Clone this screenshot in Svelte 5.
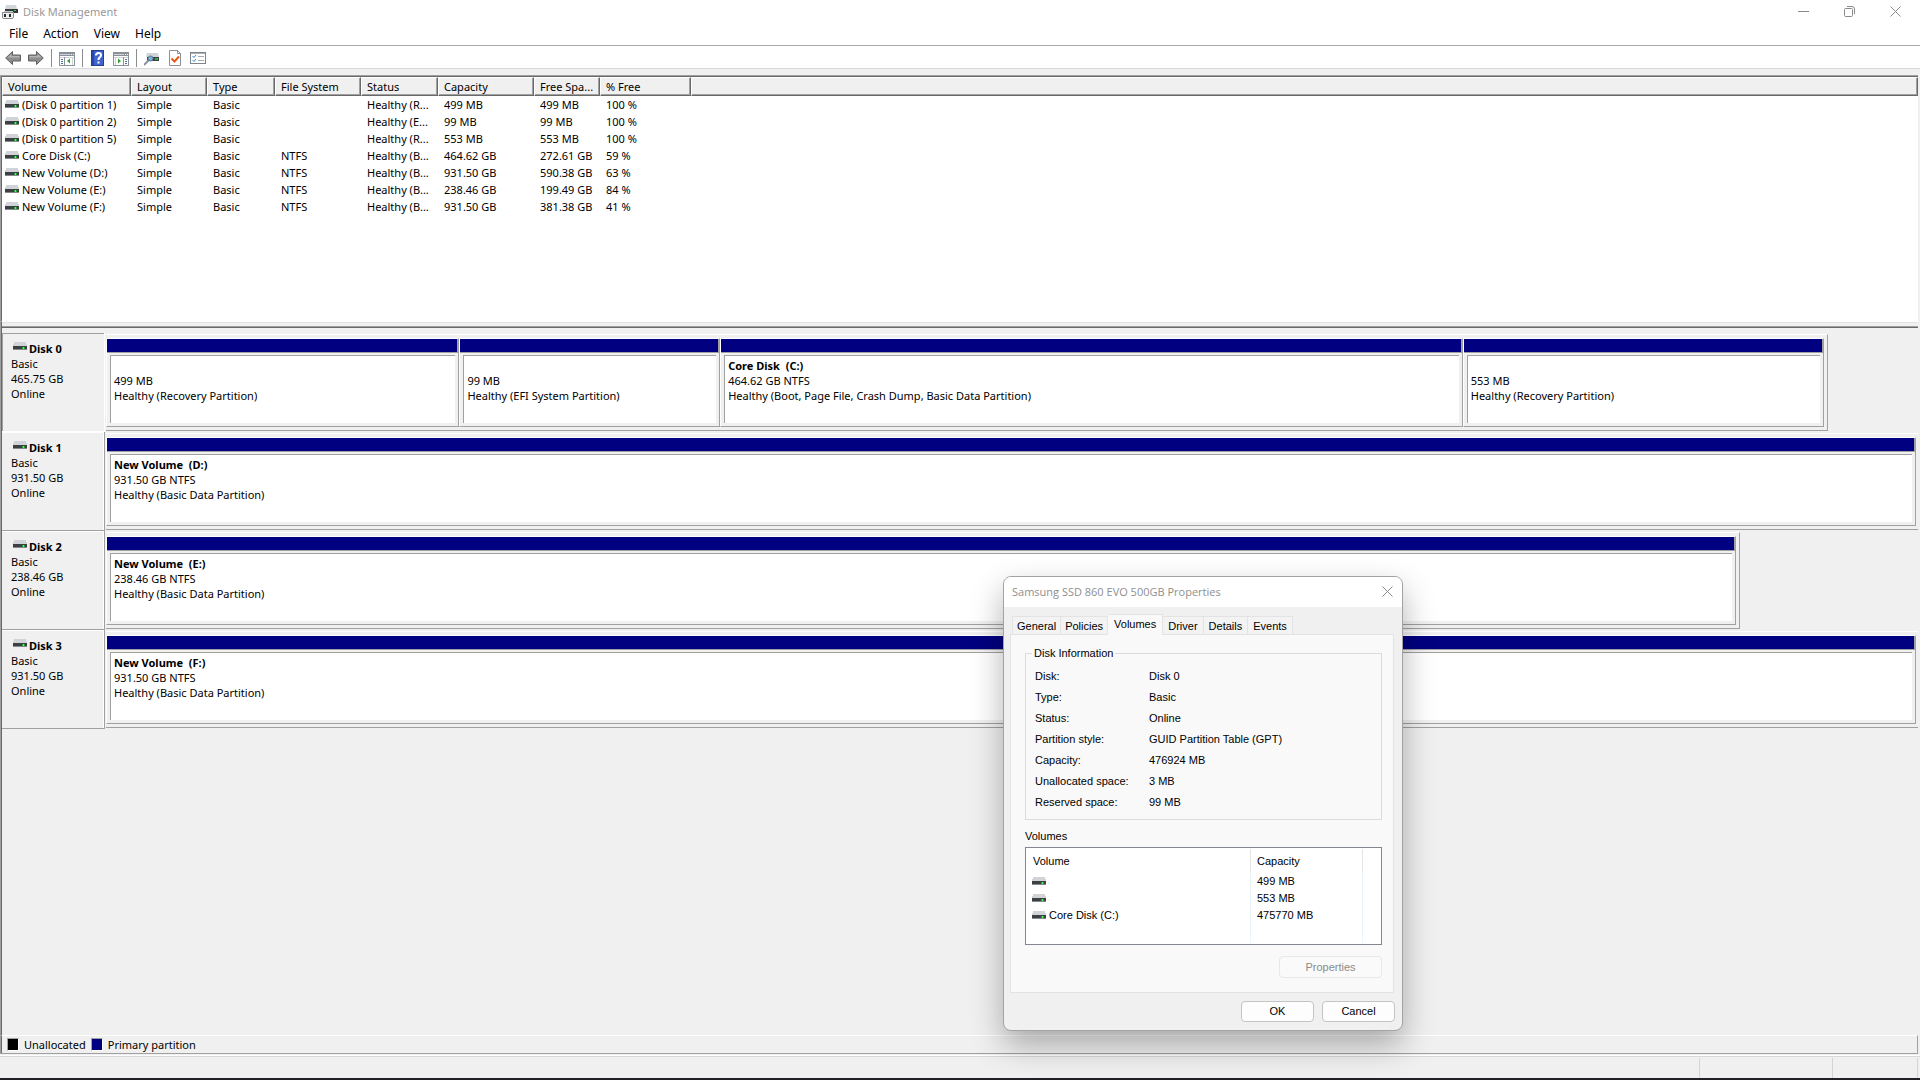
<script>
    const menus = ['File', 'Action', 'View', 'Help'];
    const columns = ['Volume', 'Layout', 'Type', 'File System', 'Status', 'Capacity', 'Free Spa...', '% Free'];
    const columnWidths = [129, 76, 68, 86, 77, 96, 66, 91];

    const volumes = [
        ['(Disk 0 partition 1)', 'Simple', 'Basic', '', 'Healthy (R...', '499 MB', '499 MB', '100 %'],
        ['(Disk 0 partition 2)', 'Simple', 'Basic', '', 'Healthy (E...', '99 MB', '99 MB', '100 %'],
        ['(Disk 0 partition 5)', 'Simple', 'Basic', '', 'Healthy (R...', '553 MB', '553 MB', '100 %'],
        ['Core Disk (C:)', 'Simple', 'Basic', 'NTFS', 'Healthy (B...', '464.62 GB', '272.61 GB', '59 %'],
        ['New Volume (D:)', 'Simple', 'Basic', 'NTFS', 'Healthy (B...', '931.50 GB', '590.38 GB', '63 %'],
        ['New Volume (E:)', 'Simple', 'Basic', 'NTFS', 'Healthy (B...', '238.46 GB', '199.49 GB', '84 %'],
        ['New Volume (F:)', 'Simple', 'Basic', 'NTFS', 'Healthy (B...', '931.50 GB', '381.38 GB', '41 %']
    ];

    // width: share of the pane, share: relative width of each partition
    const disks = [
        {
            name: 'Disk 0', size: '465.75 GB', width: 95.04,
            partitions: [
                { name: '', size: '499 MB', status: 'Healthy (Recovery Partition)', share: 353 },
                { name: '', size: '99 MB', status: 'Healthy (EFI System Partition)', share: 260 },
                { name: 'Core Disk  (C:)', size: '464.62 GB NTFS', status: 'Healthy (Boot, Page File, Crash Dump, Basic Data Partition)', share: 744 },
                { name: '', size: '553 MB', status: 'Healthy (Recovery Partition)', share: 361 }
            ]
        },
        {
            name: 'Disk 1', size: '931.50 GB', width: 100.1,
            partitions: [{ name: 'New Volume  (D:)', size: '931.50 GB NTFS', status: 'Healthy (Basic Data Partition)', share: 1 }]
        },
        {
            name: 'Disk 2', size: '238.46 GB', width: 90.2,
            partitions: [{ name: 'New Volume  (E:)', size: '238.46 GB NTFS', status: 'Healthy (Basic Data Partition)', share: 1 }]
        },
        {
            name: 'Disk 3', size: '931.50 GB', width: 100.1,
            partitions: [{ name: 'New Volume  (F:)', size: '931.50 GB NTFS', status: 'Healthy (Basic Data Partition)', share: 1 }]
        }
    ];

    const tabs = ['General', 'Policies', 'Volumes', 'Driver', 'Details', 'Events'];
    const diskInfo = [
        ['Disk:', 'Disk 0'],
        ['Type:', 'Basic'],
        ['Status:', 'Online'],
        ['Partition style:', 'GUID Partition Table (GPT)'],
        ['Capacity:', '476924 MB'],
        ['Unallocated space:', '3 MB'],
        ['Reserved space:', '99 MB']
    ];
    const diskVolumes = [
        ['', '499 MB'],
        ['', '553 MB'],
        ['Core Disk (C:)', '475770 MB']
    ];

    let selectedDisk = $state(0);
    let activeTab = $state('Volumes');
    let dialogOpen = $state(true);
</script>

{#snippet driveIcon()}
    <svg class="drive" width="14" height="9" viewBox="0 0 14 9" aria-hidden="true">
        <path d="M1 0h12v2h1v2H0V2h1z" fill="#d0d4d8" />
        <rect y="4" width="14" height="4" fill="#3c4043" />
        <rect y="7" width="14" height="1" fill="#85898d" />
        <rect x="9" y="5" width="3" height="2" fill="#1f9a2c" />
        <rect x="10" y="5" width="1" height="2" fill="#4dff5a" />
    </svg>
{/snippet}

<div class="window">
    <header class="titlebar">
        <svg width="16" height="16" viewBox="0 0 16 16" aria-hidden="true">
            <path d="M4 1h10l1 4H3z" fill="#d3d6d9" />
            <rect x="3" y="5" width="13" height="4" fill="#34383b" />
            <rect x="12" y="6" width="2" height="1" fill="#2fd23c" />
            <rect x="2" y="7" width="9" height="2" fill="#c6c8ca" />
            <path d="M0 8h12v6H11v1H1v-1H0z" fill="#8b8e91" />
            <path d="M1 9h10v5H1z" fill="#eceef0" />
            <rect x="2" y="10" width="2" height="3" fill="#26292b" />
            <rect x="7" y="10" width="2" height="3" fill="#26292b" />
        </svg>
        <h1>Disk Management</h1>
        <div class="window-buttons">
            <button aria-label="Minimize">
                <svg width="11" height="11" viewBox="0 0 11 11"><path d="M0 5.5h11" /></svg>
            </button>
            <button aria-label="Restore">
                <svg width="11" height="11" viewBox="0 0 11 11"><rect x=".5" y="2.5" width="8" height="8" rx="1" /><path d="M3 .5h5q2.500 0 2.500 2.500v5" /></svg>
            </button>
            <button aria-label="Close">
                <svg width="11" height="11" viewBox="0 0 11 11"><path d="M.5.500l10 10M10.500.500l-10 10" /></svg>
            </button>
        </div>
    </header>

    <nav class="menubar">
        {#each menus as menu}
            <button>{menu}</button>
        {/each}
    </nav>

    <div class="toolbar">
        <button aria-label="Back">
            <svg width="16" height="16" viewBox="0 0 16 16"><path d="M.7 8L7.500 1.500V5h8v6h-8v3.500z" fill="#8d8d8d" stroke="#5f5f5f" /><path d="M2.500 7.500L6.500 4v2h8v1.500z" fill="#b4b4b4" /></svg>
        </button>
        <button aria-label="Forward">
            <svg width="16" height="16" viewBox="0 0 16 16"><path d="M15.300 8L8.500 1.500V5h-8v6h8v3.500z" fill="#8d8d8d" stroke="#5f5f5f" /><path d="M13.500 7.500L9.500 4v2h-8v1.500z" fill="#b4b4b4" /></svg>
        </button>
        <span class="separator"></span>
        <button aria-label="Show/Hide Console Tree">
            <svg width="16" height="16" viewBox="0 0 16 16">
                <rect x=".5" y="2.500" width="15" height="13" fill="#fff" stroke="#8b9199" />
                <path d="M1 3h14v3H1z" fill="#8b9199" /><path d="M1 4.500h10M1 7.500h14" stroke="#cfd3d7" />
                <path d="M12 4.500h1M14 4.500h1" stroke="#fff" />
                <path d="M5.500 7v8" stroke="#8b9199" /><path d="M2 9.500h2M2 11.500h2M2 13.500h2" stroke="#4c6f9c" />
                <path d="M11 8.500v5l-3-2.500z" fill="#33a52c" /><path d="M13.500 8v7" stroke="#ccd0d4" />
            </svg>
        </button>
        <span class="separator"></span>
        <button aria-label="Help">
            <svg width="16" height="16" viewBox="0 0 16 16">
                <rect x="1.500" y=".5" width="12" height="15" fill="#3f63cf" stroke="#273f8f" /><path d="M2 1h2v14H2z" fill="#2747a6" />
                <path d="M6 5.500Q6 3 8.500 3T11 5.300Q11 6.500 9.700 7.400T8.500 10" fill="none" stroke="#fff" stroke-width="2" /><rect x="7.500" y="11.500" width="2" height="2" fill="#fff" />
            </svg>
        </button>
        <button aria-label="Show/Hide Action Pane">
            <svg width="16" height="16" viewBox="0 0 16 16">
                <rect x=".5" y="2.500" width="15" height="13" fill="#fff" stroke="#8b9199" />
                <path d="M1 3h14v3H1z" fill="#8b9199" /><path d="M1 4.500h10M1 7.500h14" stroke="#cfd3d7" />
                <path d="M12 4.500h1M14 4.500h1" stroke="#fff" />
                <path d="M10.500 7v8" stroke="#8b9199" /><path d="M12 9.500h2M12 11.500h2M12 13.500h2" stroke="#4c6f9c" />
                <path d="M5 8.500v5l3-2.500z" fill="#33a52c" /><path d="M2.500 8v7" stroke="#ccd0d4" />
            </svg>
        </button>
        <span class="separator"></span>
        <button aria-label="Rescan Disks">
            <svg width="16" height="16" viewBox="0 0 16 16">
                <path d="M3 3h11l1 4H2z" fill="#d0d4d8" /><rect x="3" y="7" width="12" height="4" fill="#3c4043" />
                <rect x="11" y="8" width="3" height="2" fill="#25b432" />
                <path d="M0 15l5-5" stroke="#8796a5" stroke-width="2" /><circle cx="6.500" cy="8.500" r="2.500" fill="#7faed8" stroke="#5b7793" />
            </svg>
        </button>
        <button aria-label="Properties">
            <svg width="16" height="16" viewBox="0 0 16 16">
                <path d="M2.500.500h8l3 3v12h-11z" fill="#fff" stroke="#8b9199" /><path d="M10.500.500v3h3" fill="none" stroke="#8b9199" />
                <path d="M4.500 8.500l3 3 4.500-5" fill="none" stroke="#e8591b" stroke-width="2" />
            </svg>
        </button>
        <button aria-label="Settings">
            <svg width="16" height="16" viewBox="0 0 16 16">
                <rect x=".5" y="2.500" width="15" height="11" fill="#fff" stroke="#7d858e" /><path d="M1 3.500h14" stroke="#a9afb6" />
                <path d="M2.500 6l1.500 1.500L6 5M2.500 10l1.500 1.500L6 9" fill="none" stroke="#3a86d0" /><path d="M8 6.500h6M8 10.500h6" stroke="#a4abb3" />
            </svg>
        </button>
    </div>

    <main>
        <section class="volume-list">
            <table>
                <colgroup>
                    {#each columnWidths as width}
                        <col style="width: {width}px" />
                    {/each}
                    <col />
                </colgroup>
                <thead>
                    <tr>
                        {#each columns as column}
                            <th>{column}</th>
                        {/each}
                        <th></th>
                    </tr>
                </thead>
                <tbody>
                    {#each volumes as row}
                        <tr>
                            {#each row as cell, i}
                                {#if i === 0}
                                    <td class="name"><span>{@render driveIcon()}{cell}</span></td>
                                {:else}
                                    <td>{cell}</td>
                                {/if}
                            {/each}
                            <td></td>
                        </tr>
                    {/each}
                </tbody>
            </table>
        </section>
        <div class="splitter"></div>

        <section class="disks">
            {#each disks as disk, i}
                <div class="disk">
                    <button class="disk-label" class:selected={selectedDisk === i} onclick={() => (selectedDisk = i)}>
                        <strong>{@render driveIcon()}{disk.name}</strong>
                        <span>Basic</span>
                        <span>{disk.size}</span>
                        <span>Online</span>
                    </button>
                    <div class="strip-area">
                        <div class="strip" style="width: {disk.width}%">
                            {#each disk.partitions as partition}
                                <div class="partition" style="flex-grow: {partition.share}">
                                    <div class="bar"></div>
                                    <div class="body">
                                        <div class="box">
                                            <strong>{partition.name}</strong>
                                            <span>{partition.size}</span>
                                            <span>{partition.status}</span>
                                        </div>
                                    </div>
                                </div>
                            {/each}
                        </div>
                    </div>
                </div>
            {/each}
        </section>

        <div class="legend">
            <span class="swatch unallocated"></span>Unallocated
            <span class="swatch primary"></span>Primary partition
        </div>
    </main>

    <footer class="statusbar">
        <span class="grow"></span>
        <span class="wide"></span>
        <span class="narrow"></span>
    </footer>
</div>

{#if dialogOpen}
    <div class="dialog" role="dialog" aria-labelledby="dialog-title">
        <div class="dialog-title">
            <h2 id="dialog-title">Samsung SSD 860 EVO 500GB Properties</h2>
            <button aria-label="Close" onclick={() => (dialogOpen = false)}>
                <svg width="11" height="11" viewBox="0 0 11 11"><path d="M.5.500l10 10M10.500.500l-10 10" /></svg>
            </button>
        </div>
        <div class="tabs" role="tablist">
            {#each tabs as tab}
                <button role="tab" class:active={activeTab === tab} aria-selected={activeTab === tab} onclick={() => (activeTab = tab)}>{tab}</button>
            {/each}
        </div>
        <div class="panel">
            <fieldset>
                <legend>Disk Information</legend>
                <dl>
                    {#each diskInfo as [label, value]}
                        <dt>{label}</dt>
                        <dd>{value}</dd>
                    {/each}
                </dl>
            </fieldset>
            <h3>Volumes</h3>
            <div class="disk-volumes">
                <table>
                    <thead>
                        <tr><th>Volume</th><th>Capacity</th><th></th></tr>
                    </thead>
                    <tbody>
                        {#each diskVolumes as [name, capacity]}
                            <tr>
                                <td><span>{@render driveIcon()}{name}</span></td>
                                <td>{capacity}</td>
                                <td></td>
                            </tr>
                        {/each}
                        <tr class="filler"><td></td><td></td><td></td></tr>
                    </tbody>
                </table>
            </div>
            <button class="push properties" disabled>Properties</button>
        </div>
        <div class="actions">
            <button class="push" onclick={() => (dialogOpen = false)}>OK</button>
            <button class="push" onclick={() => (dialogOpen = false)}>Cancel</button>
        </div>
    </div>
{/if}

<style>
    :global(body) {
        margin: 0;
        background: #f0f0f0;
    }

    * {
        box-sizing: border-box;
    }

    button {
        margin: 0;
        padding: 0;
        border: 0;
        background: none;
        color: inherit;
        font: inherit;
    }

    h1, h2, h3, dl, dd {
        margin: 0;
        font-size: inherit;
        font-weight: normal;
    }

    svg {
        display: block;
        flex: none;
    }

    .window {
        display: flex;
        flex-direction: column;
        min-height: 100vh;
        border-bottom: 2px solid #202124;
        background: #f0f0f0;
        color: #000;
        font: 11px/15px "Noto Sans", "Open Sans", sans-serif;
    }

    .titlebar {
        display: flex;
        align-items: center;
        height: 23px;
        padding-left: 2px;
        background: #fff;
        color: #999;
    }

    h1 {
        margin-left: 5px;
    }

    .window-buttons {
        display: flex;
        margin-left: auto;
        padding-right: 2px;
    }

    .window-buttons button {
        display: flex;
        align-items: center;
        justify-content: center;
        width: 46px;
        height: 21px;
    }

    .window-buttons svg, .dialog-title svg {
        fill: none;
        stroke: #8a8a8a;
    }

    .menubar {
        display: flex;
        gap: 15px;
        height: 23px;
        padding: 0 0 2px 9px;
        border-bottom: 1px solid #a8aab0;
        background: #fff;
        font-size: 12px;
    }

    .toolbar {
        display: flex;
        align-items: center;
        height: 23px;
        padding: 2px 0 0 5px;
        border-bottom: 1px solid #dadada;
        background: #fff;
    }

    .toolbar button {
        margin-right: 7px;
    }

    .separator {
        width: 1px;
        height: 18px;
        margin-right: 7px;
        background: #8c8c8c;
    }

    main {
        display: flex;
        flex: 1;
        flex-direction: column;
        margin: 6px 2px 2px 0;
        border-top: 1px solid #a0a0a0;
        border-left: 1px solid #a0a0a0;
        border-bottom: 1px solid #a0a0a0;
    }

    .volume-list {
        min-height: 245px;
        border-top: 1px solid #696969;
        border-left: 1px solid #696969;
        background: #fff;
    }

    table {
        width: 100%;
        border-spacing: 0;
        table-layout: fixed;
    }

    th, td {
        padding: 0;
        font-weight: normal;
        text-align: left;
        white-space: nowrap;
    }

    .volume-list th {
        height: 19px;
        padding: 0 0 0 5px;
        border: 1px solid;
        border-color: #fff #696969 #696969 #fff;
        background: #f0f0f0;
        box-shadow: inset -1px -1px #a0a0a0;
    }

    .volume-list td {
        height: 17px;
        padding-left: 6px;
    }

    .volume-list .name {
        padding-left: 3px;
    }

    .name span, .disk-volumes td span {
        display: flex;
        align-items: center;
        gap: 3px;
    }

    .splitter {
        height: 7px;
        border-top: 1px solid #fff;
        border-bottom: 1px solid #696969;
        border-left: 1px solid #696969;
        box-shadow: inset 0 1px #e3e3e3, inset 0 -1px #a0a0a0;
    }

    .disks {
        flex: 1;
        padding-top: 5px;
        border-left: 1px solid #696969;
    }

    .disk {
        display: flex;
        height: 99px;
        overflow: hidden;
    }

    .disk-label {
        display: flex;
        flex-direction: column;
        width: 103px;
        padding: 8px 0 0 9px;
        border-right: 1px solid #a0a0a0;
        border-bottom: 1px solid #a0a0a0;
        box-shadow: inset 0 1px #fff, inset -1px 0 #fff;
        text-align: left;
    }

    .disk-label.selected {
        border-color: #fff;
        box-shadow: inset 1px 1px #a0a0a0;
    }

    .disk-label strong {
        display: flex;
        gap: 2px;
        padding-left: 2px;
    }

    .disk-label .drive {
        margin-top: 1px;
    }

    .strip-area {
        flex: 1;
        padding: 1px 0;
        border-left: 1px solid #f0f0f0;
    }

    .strip {
        display: flex;
        height: 97px;
        padding: 3px 3px 3px 0;
        border-top: 1px solid #fff;
        border-right: 1px solid #a0a0a0;
        border-bottom: 1px solid #a0a0a0;
    }

    .partition {
        display: flex;
        flex-basis: 0;
        flex-direction: column;
        min-width: 0;
        border: 1px solid;
        border-color: #fff #a0a0a0 #a0a0a0 #fff;
    }

    .bar {
        height: 14px;
        border-right: 1px solid #a0a0a0;
        border-bottom: 1px solid #a0a0a0;
        background: #000080;
    }

    .body {
        display: flex;
        flex: 1;
        padding: 2px 3px 3px;
    }

    .box {
        display: flex;
        flex: 1;
        flex-direction: column;
        min-width: 0;
        padding: 2px 0 0 3px;
        border-top: 1px solid #a0a0a0;
        border-left: 1px solid #a0a0a0;
        background: #fff;
        white-space: pre;
    }

    .box strong {
        min-height: 15px;
    }

    .legend {
        display: flex;
        align-items: center;
        height: 18px;
        padding-left: 5px;
        border-top: 1px solid #fff;
        border-right: 1px solid #a0a0a0;
        border-left: 1px solid #696969;
        gap: 5px;
    }

    .swatch {
        width: 12px;
        height: 13px;
        border: 1px solid;
        border-color: #a0a0a0 #fff #fff #a0a0a0;
    }

    .unallocated {
        background: #000;
    }

    .primary {
        background: #000080;
    }

    .statusbar {
        display: flex;
        height: 22px;
        padding: 1px 2px 0 0;
        border-top: 1px solid #d8d8d8;
        box-shadow: 0 -1px #fff;
    }

    .statusbar span {
        border-right: 1px solid #d4d4d4;
    }

    .grow {
        flex: 1;
    }

    .wide {
        width: 133px;
    }

    .narrow {
        width: 85px;
    }

    .dialog {
        position: absolute;
        top: 576px;
        left: 1003px;
        width: 400px;
        padding-bottom: 8px;
        border: 1px solid #a3a3a3;
        border-radius: 8px;
        background: #f0f0f0;
        box-shadow: 0 14px 32px rgba(0, 0, 0, 0.3);
        color: #000;
        font: 11px/13px "Liberation Sans", Arial, sans-serif;
    }

    .dialog-title {
        display: flex;
        align-items: center;
        justify-content: space-between;
        height: 30px;
        padding: 0 9px 2px 8px;
        border-radius: 7px 7px 0 0;
        background: #fff;
        color: #8f8f8f;
        font: 11px/15px "Open Sans", "Noto Sans", sans-serif;
    }

    .tabs {
        display: flex;
        align-items: flex-end;
        height: 27px;
        padding-left: 8px;
    }

    .tabs button {
        height: 18px;
        padding: 1px 4px 0;
        border: 1px solid #e3e3e3;
        border-bottom: 0;
        border-left: 0;
        background: #f3f3f3;
    }

    .tabs button:first-child {
        border-left: 1px solid #e3e3e3;
    }

    .tabs .active {
        z-index: 1;
        height: 21px;
        margin-bottom: -1px;
        padding: 0 6px 2px;
        background: #f9f9f9;
    }

    .tabs .active ~ button {
        padding: 1px 5px 0;
    }

    .panel {
        display: flex;
        flex-direction: column;
        margin: 0 8px 0 6px;
        padding: 12px 11px 14px 14px;
        border: 1px solid #e3e3e3;
        background: #f9f9f9;
    }

    fieldset {
        margin: 0;
        padding: 6px 9px;
        border: 1px solid #dcdcdc;
    }

    legend {
        margin-left: -3px;
        padding: 0 2px;
    }

    dl {
        display: grid;
        grid-template-columns: 114px 1fr;
        line-height: 21px;
    }

    h3 {
        margin: 10px 0 4px;
    }

    .disk-volumes {
        padding: 1px 0;
        border: 1px solid #828790;
        background: #fff;
    }

    .disk-volumes th {
        height: 24px;
        padding-left: 6px;
        border-right: 1px solid #e5e5e5;
    }

    .disk-volumes th:first-child {
        width: 225px;
        padding-left: 7px;
    }

    .disk-volumes th:nth-child(2) {
        width: 112px;
    }

    .disk-volumes td {
        height: 17px;
        padding-left: 6px;
        border-right: 1px solid #e9f4fd;
    }

    .disk-volumes th:last-child, .disk-volumes td:last-child {
        border-right: 0;
    }

    .disk-volumes .filler td {
        height: 19px;
    }

    .push {
        width: 73px;
        height: 21px;
        border: 1px solid #c4c4c4;
        border-radius: 4px;
        background: #fdfdfd;
    }

    .push.properties {
        align-self: flex-end;
        width: 103px;
        height: 22px;
        margin-top: 11px;
        border-color: #e8e8e8;
        background: #fafafa;
        color: #8a8a8a;
    }

    .actions {
        display: flex;
        justify-content: flex-end;
        gap: 8px;
        padding: 8px 7px 0 0;
    }
</style>
